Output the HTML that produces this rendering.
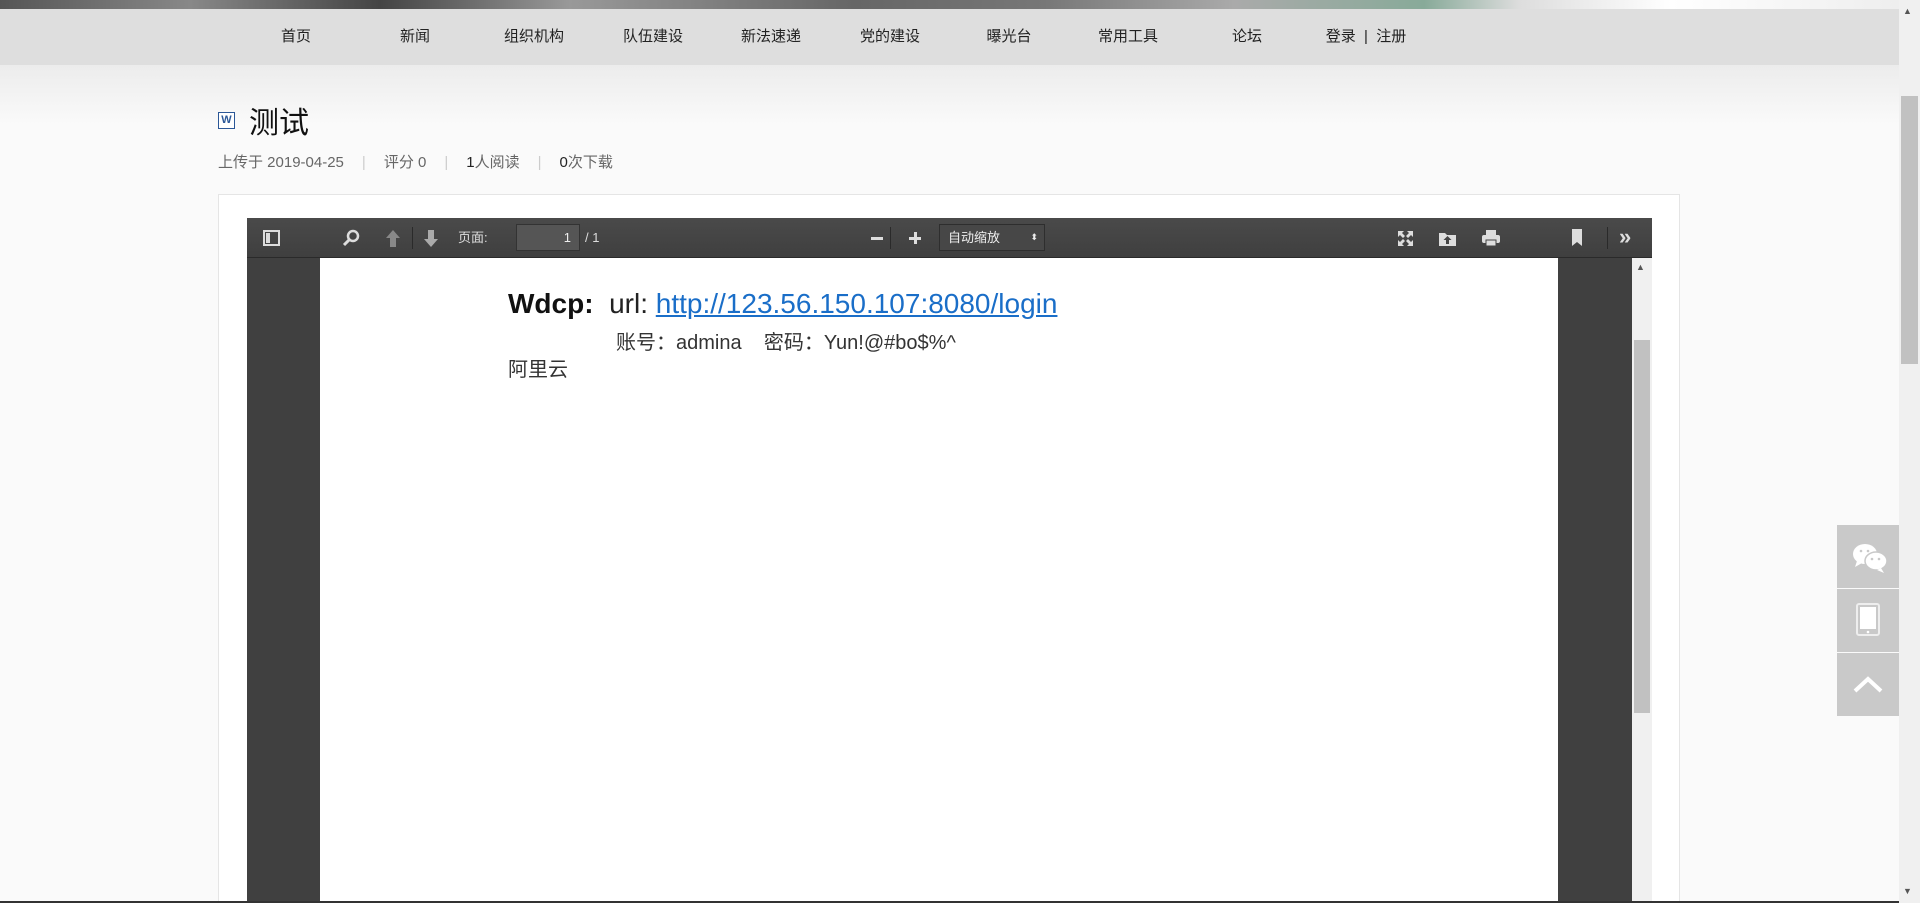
<!DOCTYPE html>
<html style="overflow:hidden;height:903px"><head><meta charset="utf-8"><style>
*{margin:0;padding:0;box-sizing:border-box}
html,body{width:1920px;height:903px;overflow:hidden}
body{background:#fafafa;font-family:"Liberation Sans","Noto Sans CJK SC",sans-serif;position:relative}
.strip{position:absolute;left:0;top:0;width:1899px;height:9px;background:linear-gradient(90deg,#555,#888 10%,#444 20%,#999 30%,#666 45%,#777 55%,#aaa 65%,#8a9 75%,#ddd 80%,#fff 88%,#eee 100%)}
.nav{position:absolute;left:0;top:9px;width:1899px;height:56px;background:#dedede}
.shadow{position:absolute;left:0;top:65px;width:1899px;height:60px;background:linear-gradient(#ececec,#fafafa)}
.nav span{position:absolute;top:0;line-height:56px;font-size:15px;color:#222;transform:translateX(-50%);white-space:nowrap}
.title{position:absolute;left:249px;top:106px;font-size:30px;color:#111;line-height:36px}
.wicon{position:absolute;left:218px;top:112px;width:17px;height:17px;border:1px solid #2b5797;background:#fff;color:#2b5797;font-size:11px;font-weight:bold;text-align:center;line-height:15px}
.meta{position:absolute;left:218px;top:154px;font-size:15px;color:#666;line-height:18px;white-space:nowrap}
.meta i{font-style:normal;color:#ccc;margin:0 18px}
.meta b{font-weight:normal;color:#222}
.box{position:absolute;left:218px;top:194px;width:1462px;height:709px;background:#fff;border:1px solid #e5e5e5}
.viewer{position:absolute;left:247px;top:218px;width:1405px;height:685px;background:#404040;overflow:hidden}
.tb{position:absolute;left:0;top:0;width:1405px;height:40px;background:linear-gradient(#4a4a4a,#3f3f3f);border-bottom:1px solid #2a2a2a;color:#ddd;font-size:14px}
.tb .t{position:absolute;top:0;line-height:40px}
.page{position:absolute;left:73px;top:40px;width:1238px;height:645px;background:#fff}
.sb{position:absolute;left:1385px;top:40px;width:20px;height:645px;background:#f0f0f0}
.side{position:absolute;left:1837px;width:62px;height:63px;background:#c9c9c9}
</style></head><body>
<div class="strip"></div>
<div class="nav">
<span style="left:296px">首页</span><span style="left:415px">新闻</span><span style="left:534px">组织机构</span><span style="left:653px">队伍建设</span><span style="left:771px">新法速递</span><span style="left:890px">党的建设</span><span style="left:1009px">曝光台</span><span style="left:1128px">常用工具</span><span style="left:1247px">论坛</span><span style="left:1366px">登录 &nbsp;|&nbsp; 注册</span>
</div>
<div class="shadow"></div>
<div class="wicon">W</div>
<div class="title">测试</div>
<div class="meta">上传于 2019-04-25<i>|</i>评分 0<i>|</i><b>1</b>人阅读<i>|</i><b>0</b>次下载</div>
<div class="box"></div>
<div class="viewer">
<div class="tb">
<svg style="position:absolute;left:16px;top:12px" width="17" height="16"><rect x="1" y="1" width="15" height="14" fill="none" stroke="#ddd" stroke-width="2"/><rect x="3" y="3" width="4" height="10" fill="#ddd"/></svg>
<svg style="position:absolute;left:95px;top:11px" width="18" height="18"><circle cx="11" cy="7" r="5" fill="none" stroke="#ddd" stroke-width="2.5"/><line x1="7" y1="11" x2="2" y2="16" stroke="#ddd" stroke-width="3"/></svg>
<svg style="position:absolute;left:138px;top:11px" width="16" height="19"><path d="M8 1 L15 9 H11 V18 H5 V9 H1 Z" fill="#888"/></svg>
<div style="position:absolute;left:165px;top:9px;width:1px;height:22px;background:#2a2a2a"></div>
<svg style="position:absolute;left:176px;top:11px" width="16" height="19"><path d="M8 18 L15 10 H11 V1 H5 V10 H1 Z" fill="#aaa"/></svg>
<span class="t" style="left:211px;font-size:13px">页面:</span>
<div style="position:absolute;left:269px;top:6px;width:64px;height:27px;background:#555;border:1px solid #333;color:#eee;font-size:13px;text-align:right;padding-right:8px;line-height:25px">1</div>
<span class="t" style="left:338px;font-size:13px">/ 1</span>
<div style="position:absolute;left:624px;top:19px;width:12px;height:3px;background:#ddd"></div>
<div style="position:absolute;left:643px;top:9px;width:1px;height:22px;background:#2a2a2a"></div>
<div style="position:absolute;left:662px;top:19px;width:12px;height:3px;background:#ddd"></div>
<div style="position:absolute;left:667px;top:14px;width:3px;height:12px;background:#ddd"></div>
<div style="position:absolute;left:692px;top:6px;width:106px;height:27px;background:#474747;border:1px solid #2e2e2e;color:#eee;font-size:13px;line-height:25px;padding-left:8px">自动缩放<span style="position:absolute;right:6px;font-size:9px">⬍</span></div>
<svg style="position:absolute;left:1150px;top:12px" width="17" height="17" fill="#ddd"><path d="M1 1h6l-2 2 3 3-2 2-3-3-2 2zM16 1v6l-2-2-3 3-2-2 3-3-2-2zM1 16v-6l2 2 3-3 2 2-3 3 2 2zM16 16h-6l2-2-3-3 2-2 3 3 2-2z"/></svg>
<svg style="position:absolute;left:1191px;top:11px" width="19" height="18" fill="#ddd"><path d="M1 4h6l2 2h9v11H1z"/><path d="M9.5 7l4 4h-2.5v4h-3v-4H5.5z" fill="#444"/></svg>
<svg style="position:absolute;left:1234px;top:11px" width="20" height="18" fill="#ddd"><rect x="5" y="1" width="10" height="5"/><rect x="1" y="6" width="18" height="8" rx="2"/><rect x="5" y="11" width="10" height="6" fill="#ddd" stroke="#444"/></svg>
<svg style="position:absolute;left:1324px;top:10px" width="12" height="19" fill="#ddd"><path d="M1 1h10v17l-5-4-5 4z"/></svg>
<div style="position:absolute;left:1360px;top:9px;width:1px;height:22px;background:#2a2a2a"></div>
<span class="t" style="left:1372px;font-size:22px;font-weight:bold;line-height:38px">»</span>
</div>
<div class="page">
<div style="position:absolute;left:188px;top:30px;font-size:28px;white-space:nowrap;color:#222"><b style="color:#111">Wdcp:</b>&nbsp; url: <span style="color:#1a6ec8;text-decoration:underline">http://123.56.150.107:8080/login</span></div>
<div style="position:absolute;left:296px;top:68px;font-size:20px;color:#333;white-space:nowrap">账号：admina &nbsp;&nbsp; 密码：Yun!@#bo$%^</div>
<div style="position:absolute;left:188px;top:95px;font-size:20px;color:#333">阿里云</div>
</div>
<div class="sb"><div style="position:absolute;left:4px;top:4px;font-size:9px;color:#555">▲</div><div style="position:absolute;left:2px;top:82px;width:16px;height:373px;background:#c1c1c1"></div></div>
</div>
<div style="position:absolute;left:1899px;top:0;width:21px;height:903px;background:#f0f0f0"><div style="position:absolute;left:4px;top:6px;font-size:9px;color:#555">▲</div><div style="position:absolute;left:2px;top:96px;width:17px;height:268px;background:#c1c1c1"></div><div style="position:absolute;left:4px;top:886px;font-size:9px;color:#555">▼</div></div>
<div class="side" style="top:525px"><svg width="62" height="63"><ellipse cx="28" cy="29" rx="12" ry="10" fill="#fff"/><path d="M20 36l-2 6 7-4z" fill="#fff"/><ellipse cx="39" cy="36" rx="11" ry="9" fill="#fff" stroke="#c9c9c9" stroke-width="1.5"/><path d="M44 43l3 5-7-3z" fill="#fff"/><circle cx="24" cy="26" r="1.3" fill="#c9c9c9"/><circle cx="31" cy="26" r="1.3" fill="#c9c9c9"/><circle cx="35" cy="34" r="1.3" fill="#c9c9c9"/><circle cx="42" cy="34" r="1.3" fill="#c9c9c9"/></svg></div>
<div class="side" style="top:589px"><svg width="62" height="63"><rect x="20" y="15" width="22" height="31" rx="2" fill="none" stroke="#eee" stroke-width="2"/><rect x="23" y="18" width="16" height="22" fill="#fff"/><circle cx="31" cy="43" r="1.3" fill="#fff"/></svg></div>
<div class="side" style="top:653px"><svg width="62" height="63"><path d="M18 38l13-12 13 12" fill="none" stroke="#fff" stroke-width="4"/></svg></div>
<div style="position:absolute;left:0;top:901px;width:1899px;height:2px;background:#333"></div>
</body></html>
